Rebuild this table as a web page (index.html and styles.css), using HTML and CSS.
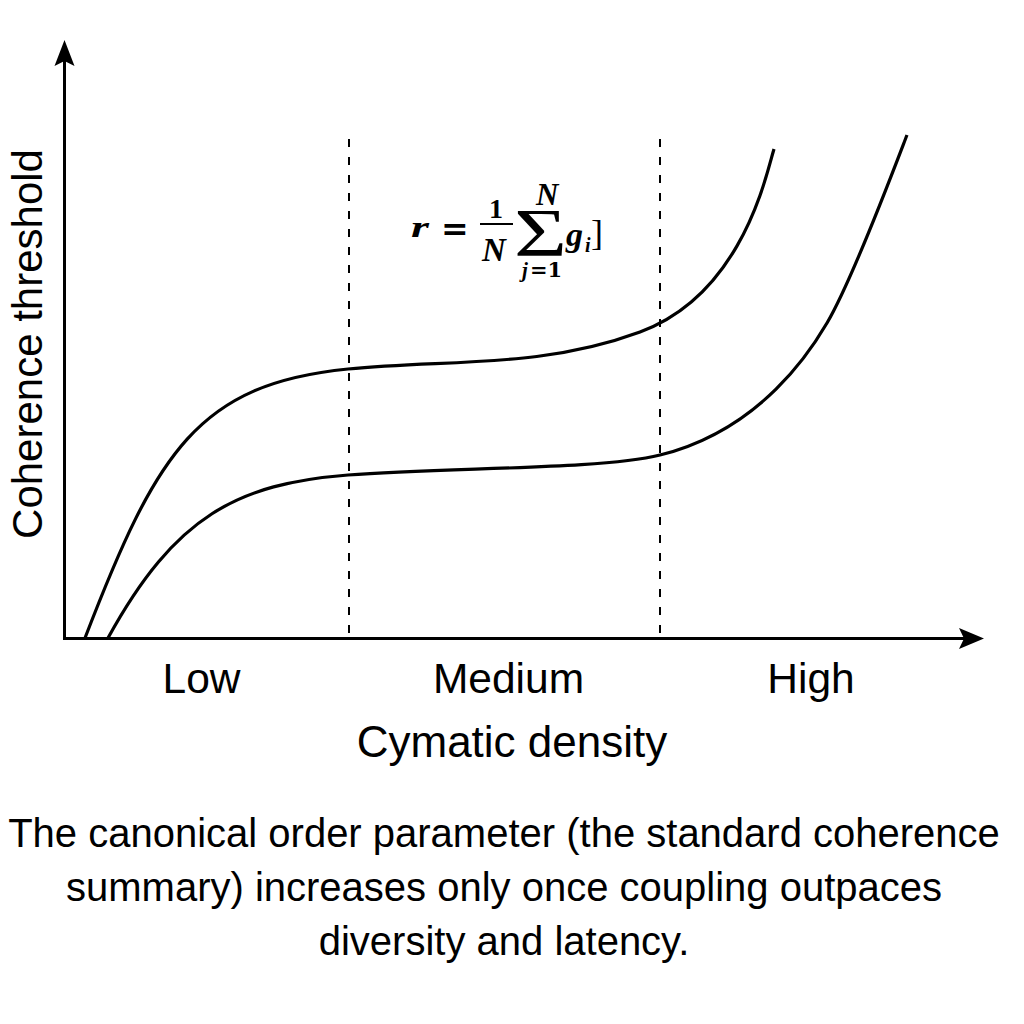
FILE: index.html
```html
<!DOCTYPE html>
<html lang="en">
<head>
<meta charset="utf-8">
<title>Coherence threshold vs cymatic density</title>
<link rel="stylesheet" href="styles.css">
</head>
<body>
<figure class="figure">
  <svg class="chart" width="1024" height="806" viewBox="0 0 1024 806" xmlns="http://www.w3.org/2000/svg">
    <!-- dashed region dividers -->
    <line class="divider" x1="349" y1="139" x2="349" y2="637"/>
    <line class="divider" x1="660" y1="139" x2="660" y2="637"/>

    <!-- curves -->
    <path class="curve" d="M85,638 C156.8,451.4 198,384 348,369 C448,359 540,369 640,332 C743.2,293.8 766.5,172.9 774,149"/>
    <path class="curve" d="M108,638 C175.3,515.2 238,483.8 348,475 C448,467 600,470 660,455 C761.9,429.5 811.8,348.9 827,323 C852.4,279.9 896.2,163 907,135"/>

    <!-- axes -->
    <line class="axis" x1="64.5" y1="640" x2="64.5" y2="58"/>
    <line class="axis" x1="63" y1="638.5" x2="966" y2="638.5"/>
    <polygon class="arrow" points="64.5,40 54.5,66 64.5,61 74.5,66"/>
    <polygon class="arrow" points="984,638.5 959,628 964,638.5 959,649"/>

    <!-- axis titles and ticks -->
    <text class="axis-title" transform="translate(42,344) rotate(-90)" text-anchor="middle">Coherence threshold</text>
    <text class="tick" x="201.5" y="693" text-anchor="middle">Low</text>
    <text class="tick" x="508.5" y="693" text-anchor="middle">Medium</text>
    <text class="tick" x="811" y="693" text-anchor="middle">High</text>
    <text class="axis-title x-title" x="512" y="757" text-anchor="middle">Cymatic density</text>

    <!-- formula annotation -->
    <line class="m-bar" x1="480" y1="224" x2="513" y2="224"/>
    <text class="formula"><tspan class="m-it m-r" x="411" y="237" textLength="18" lengthAdjust="spacingAndGlyphs">r</tspan><tspan class="m-eq" x="441" y="240">=</tspan><tspan class="m-num" x="489" y="218">1</tspan><tspan class="m-it m-den" x="482" y="261">N</tspan><tspan class="m-it m-lim" x="536" y="205">N</tspan><tspan class="m-sigma" x="514" y="255" textLength="53" lengthAdjust="spacingAndGlyphs">Σ</tspan><tspan class="m-low m-it" x="522" y="277">j</tspan><tspan class="m-low m-lowop" x="530" y="277">=1</tspan><tspan class="m-it m-g" x="566" y="245.5">g</tspan><tspan class="m-it m-idx" x="585" y="252">i</tspan><tspan class="m-br" x="591" y="245">]</tspan></text>
  </svg>
  <figcaption class="caption">The canonical order parameter (the standard coherence<br>summary) increases only once coupling outpaces<br>diversity and latency.</figcaption>
</figure>
</body>
</html>
```

FILE: styles.css
```css
html, body {
  margin: 0;
  padding: 0;
  background: #ffffff;
}

.figure {
  margin: 0;
  width: 1024px;
}

.chart {
  display: block;
}

.divider {
  stroke: #000;
  stroke-width: 2;
  stroke-dasharray: 8 10;
}

.curve {
  fill: none;
  stroke: #000;
  stroke-width: 3.2;
  stroke-linecap: butt;
  stroke-linejoin: round;
}

.axis {
  stroke: #000;
  stroke-width: 3;
}

.arrow {
  fill: #000;
}

.axis-title {
  font-family: "Liberation Sans", Arial, sans-serif;
  font-size: 42px;
  fill: #000;
}

.x-title {
  font-size: 44px;
}

.tick {
  font-family: "Liberation Sans", Arial, sans-serif;
  font-size: 42.5px;
  fill: #000;
}

/* formula */
.formula {
  font-family: "Liberation Serif", "Times New Roman", serif;
  font-weight: bold;
  fill: #000;
}

.m-it {
  font-style: italic;
}

.m-r {
  font-size: 30px;
}

.m-eq {
  font-family: "DejaVu Serif", serif;
  font-size: 33px;
}

.m-num {
  font-size: 28px;
}

.m-bar {
  stroke: #000;
  stroke-width: 2.2;
}

.m-den {
  font-size: 33px;
}

.m-lim {
  font-size: 31px;
}

.m-sigma {
  font-size: 68px;
  font-weight: normal;
}

.m-low {
  font-size: 21px;
}

.m-lowop {
  font-family: "DejaVu Serif", serif;
}

.m-g {
  font-size: 34px;
}

.m-idx {
  font-size: 20px;
}

.m-br {
  font-size: 36px;
  font-weight: normal;
}

.caption {
  margin: 0;
  padding: 0 16px 0 0;
  text-align: center;
  font-family: "Liberation Sans", Arial, sans-serif;
  font-size: 40px;
  line-height: 54px;
  color: #000;
}
```
